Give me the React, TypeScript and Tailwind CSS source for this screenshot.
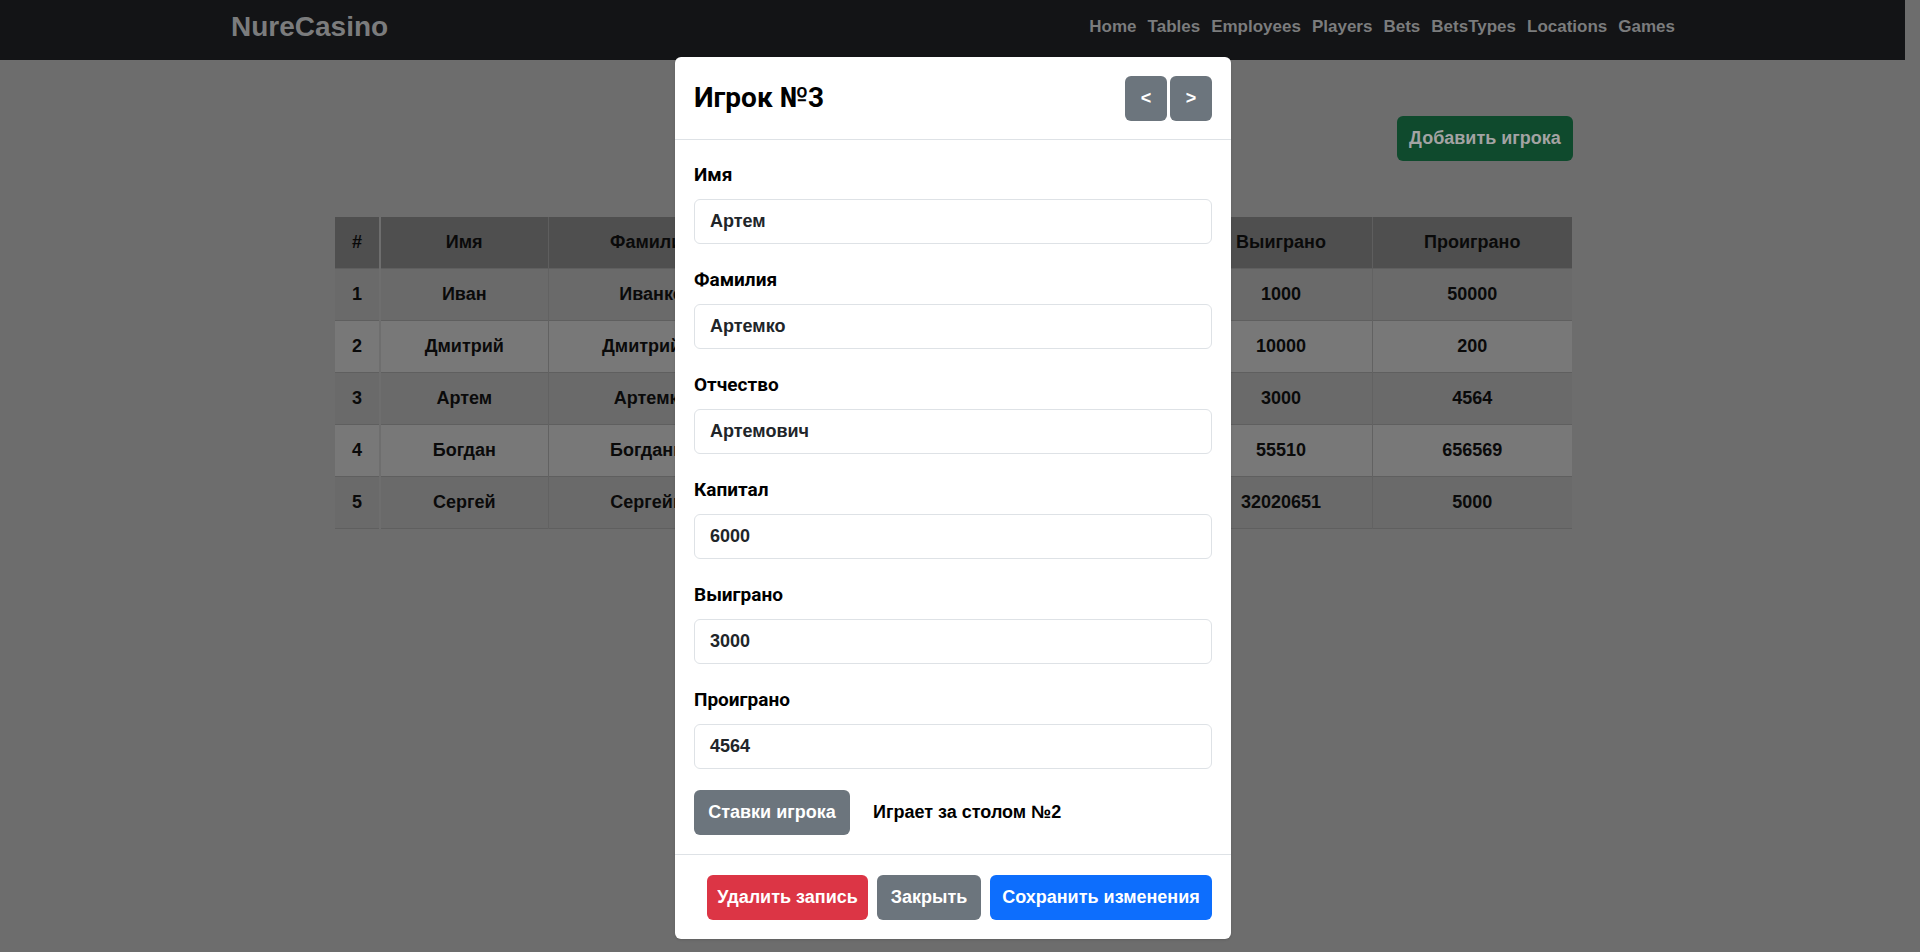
const navLinks = ["Home", "Tables", "Employees", "Players", "Bets", "BetsTypes", "Locations", "Games"];

const players = [
  { id: 1, name: "Иван", surname: "Иванко", patronymic: "Иванович", capital: "12000", won: "1000", lost: "50000" },
  { id: 2, name: "Дмитрий", surname: "Дмитрийко", patronymic: "Дмитриевич", capital: "7000", won: "10000", lost: "200" },
  { id: 3, name: "Артем", surname: "Артемко", patronymic: "Артемович", capital: "6000", won: "3000", lost: "4564" },
  { id: 4, name: "Богдан", surname: "Богданко", patronymic: "Богданович", capital: "9000", won: "55510", lost: "656569" },
  { id: 5, name: "Сергей", surname: "Сергейко", patronymic: "Сергеевич", capital: "15000", won: "32020651", lost: "5000" },
];

const fields = [
  { label: "Имя", value: "Артем" },
  { label: "Фамилия", value: "Артемко" },
  { label: "Отчество", value: "Артемович" },
  { label: "Капитал", value: "6000" },
  { label: "Выиграно", value: "3000" },
  { label: "Проиграно", value: "4564" },
];

const Field = ({ label, value }: { label: string; value: string }) => (
  <div className="mb-[21px]">
    <div className="h-[30px] leading-[30px] text-[19px] font-bold text-black font-['Roboto',sans-serif]">{label}</div>
    <div className="mt-[9px] h-[45px] flex items-center px-[15px] border border-[#dee2e6] rounded-[6px] text-[18px] font-bold text-[#212529]">
      {value}
    </div>
  </div>
);

export default function App() {
  return (
    <div className="relative w-[1920px] h-[952px] overflow-hidden bg-[#6d6d6d] font-['Liberation_Sans',Arial,sans-serif]">
      {/* navbar, darkened by the backdrop */}
      <nav className="w-[1905px] h-[60px] bg-[#131416] flex items-center justify-between pl-[231px] pr-[230px] pb-[6px]">
        <span className="text-[28px] font-bold text-[#7b7c7d]">NureCasino</span>
        <div className="flex gap-[11px] text-[17px] font-bold text-[#7b7c7d]">
          {navLinks.map((l) => (
            <span key={l}>{l}</span>
          ))}
        </div>
      </nav>

      <main className="w-[1238px] ml-[335px]">
        <div className="flex justify-end mt-[56px]">
          <div className="w-[176px] h-[45px] rounded-[6px] bg-[#0f4a2d] flex items-center justify-center text-[18px] font-bold text-[#a3a3a3]">
            Добавить игрока
          </div>
        </div>

        <table className="mt-[56px] w-[1237px] text-[18px] font-bold text-[#0a0a0a] text-center border-collapse">
          <thead>
            <tr className="h-[51px] bg-[#4f4f4f]">
              <th className="w-[45px] border-r-2 border-[#6e6e6e]">#</th>
              <th className="w-[168px] border-r border-[#5e5e5e]">Имя</th>
              <th className="w-[207px] border-r border-[#5e5e5e]">Фамилия</th>
              <th className="w-[218px] border-r border-[#5e5e5e]">Отчество</th>
              <th className="w-[217px] border-r border-[#5e5e5e]">Капитал</th>
              <th className="w-[182px] border-r border-[#5e5e5e]">Выиграно</th>
              <th className="w-[200px]">Проиграно</th>
            </tr>
          </thead>
          <tbody>
            {players.map((p, i) => (
              <tr key={p.id} className={`h-[52px] border-t border-[#5f5f5f] ${i % 2 === 0 ? "bg-[#6a6a6a]" : "bg-[#787878]"} ${i === players.length - 1 ? "border-b" : ""}`}>
                <td className="border-r-2 border-[#6e6e6e]">{p.id}</td>
                <td className="border-r border-[#626262]">{p.name}</td>
                <td className="border-r border-[#626262]">{p.surname}</td>
                <td className="border-r border-[#626262]">{p.patronymic}</td>
                <td className="border-r border-[#626262]">{p.capital}</td>
                <td className="border-r border-[#626262]">{p.won}</td>
                <td>{p.lost}</td>
              </tr>
            ))}
          </tbody>
        </table>
      </main>

      {/* modal dialog */}
      <div className="absolute left-[675px] top-[57px] w-[556px] bg-white rounded-[6px] shadow-sm">
        <div className="h-[83px] flex items-center justify-between px-[19px] border-b border-[#dee2e6]">
          <h2 className="text-[28px] font-bold text-black font-['Roboto',sans-serif] leading-none">Игрок №3</h2>
          <div className="flex gap-[3px]">
            <button className="w-[42px] h-[45px] rounded-[6px] bg-[#6c757d] text-white text-[18px] font-bold">&lt;</button>
            <button className="w-[42px] h-[45px] rounded-[6px] bg-[#6c757d] text-white text-[18px] font-bold">&gt;</button>
          </div>
        </div>

        <div className="px-[19px] pt-[20px] pb-[19px] border-b border-[#dee2e6]">
          {fields.map((f) => (
            <Field key={f.label} label={f.label} value={f.value} />
          ))}
          <div className="flex items-center gap-[23px] mt-[3px]">
            <button className="w-[156px] h-[45px] rounded-[6px] bg-[#6c757d] text-white text-[18px] font-bold">Ставки игрока</button>
            <span className="text-[18px] font-bold text-black">Играет за столом №2</span>
          </div>
        </div>

        <div className="flex justify-end gap-[9px] px-[19px] pt-[20px] pb-[19px]">
          <button className="w-[161px] h-[45px] rounded-[6px] bg-[#dc3545] text-white text-[18px] font-bold">Удалить запись</button>
          <button className="w-[104px] h-[45px] rounded-[6px] bg-[#6c757d] text-white text-[18px] font-bold">Закрыть</button>
          <button className="w-[222px] h-[45px] rounded-[6px] bg-[#0d6efd] text-white text-[18px] font-bold">Сохранить изменения</button>
        </div>
      </div>
    </div>
  );
}
